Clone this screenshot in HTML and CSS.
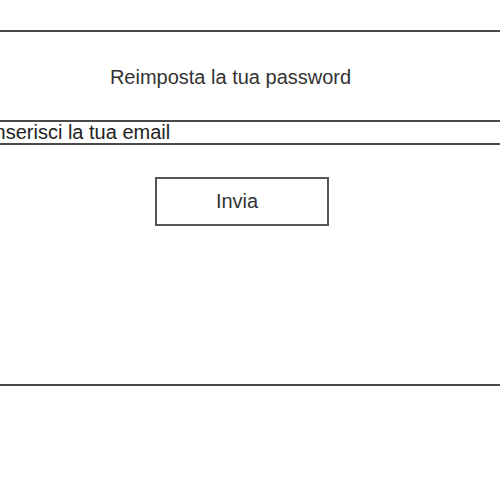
FILE: index.html
```html
<!DOCTYPE html>
<html lang="it">
<head>
<meta charset="utf-8">
<link rel="stylesheet" href="styles.css">
</head>
<body>
<div class="panel">
  <h2 class="title">Reimposta la tua password</h2>
  <div class="field">Inserisci la tua email</div>
  <div class="actions"><button class="btn">Invia</button></div>
</div>
</body>
</html>
```
FILE: styles.css
```css
html, body {
  margin: 0;
  padding: 0;
  background: #fff;
}
body {
  font-family: "Liberation Sans", Arial, sans-serif;
  overflow: hidden;
}
.panel {
  margin-top: 30px;
  height: 352px;
  border-top: 2px solid #4a4a4a;
  border-bottom: 2px solid #4a4a4a;
  display: flex;
  flex-direction: column;
}
.title {
  margin: 33px 0 0 0;
  padding-right: 39px;
  text-align: center;
  font-size: 20px;
  font-weight: normal;
  line-height: 24px;
  color: #333;
}
.field {
  margin-top: 31px;
  height: 21px;
  border-top: 2px solid #4a4a4a;
  border-bottom: 2px solid #4a4a4a;
  font-size: 20px;
  line-height: 21px;
  color: #222;
  text-indent: -11px;
  white-space: nowrap;
  overflow: hidden;
}
.actions {
  margin-top: 32px;
  padding-left: 155px;
}
.btn {
  width: 174px;
  height: 49px;
  border: 2px solid #555;
  background: #fff;
  font-family: "Liberation Sans", Arial, sans-serif;
  font-size: 20px;
  color: #333;
  padding: 0 10px 0 0;
}
```
